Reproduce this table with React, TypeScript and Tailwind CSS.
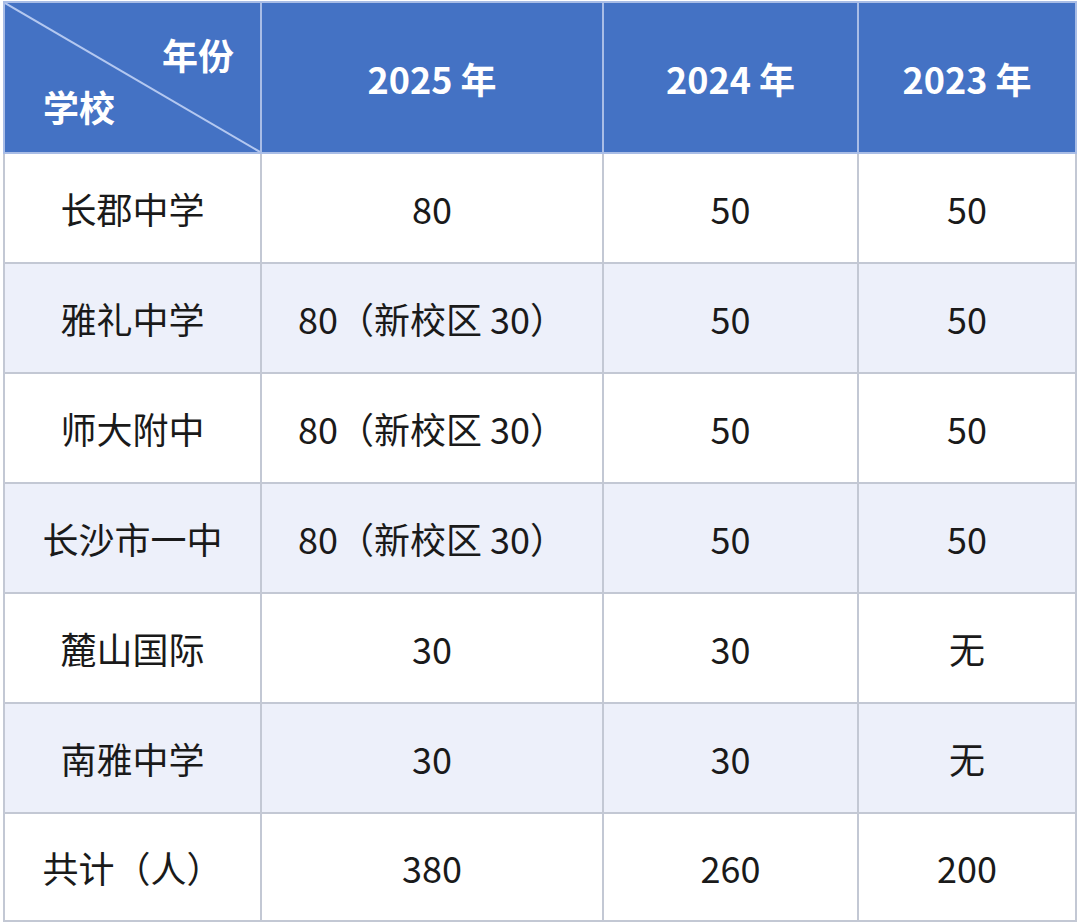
const rows = [
  {school: '长郡中学', y2025: '80', y2024: '50', y2023: '50'},
  {school: '雅礼中学', y2025: '80（新校区 30）', y2024: '50', y2023: '50'},
  {school: '师大附中', y2025: '80（新校区 30）', y2024: '50', y2023: '50'},
  {school: '长沙市一中', y2025: '80（新校区 30）', y2024: '50', y2023: '50'},
  {school: '麓山国际', y2025: '30', y2024: '30', y2023: '无'},
  {school: '南雅中学', y2025: '30', y2024: '30', y2023: '无'},
];

const font = {fontFamily: '"Noto Sans CJK SC", "Noto Sans", sans-serif'};

export default function App() {
  return (
    <div className="min-h-[923px] bg-white pl-[3px] pt-[1px]" style={font}>
      <table className="w-[1072px] table-fixed border-collapse text-[36px] text-[#1a1a1a]">
        <colgroup>
          <col className="w-[257px]" />
          <col className="w-[342px]" />
          <col className="w-[255px]" />
          <col className="w-[218px]" />
        </colgroup>
        <thead>
          <tr className="h-[151px] bg-[#4472c4] font-bold text-white">
            <th className="relative border-2 border-[#a9bde6] p-0">
              <svg className="absolute inset-0 h-full w-full" preserveAspectRatio="none" viewBox="0 0 100 100">
                <line x1="0" y1="0" x2="100" y2="100" stroke="#b4c8f0" strokeWidth="2" vectorEffect="non-scaling-stroke" />
              </svg>
              <div className="relative flex h-full flex-col pl-[38px] pr-[26px]">
                <span className="self-end pt-[5px] leading-none">年份</span>
                <span className="mt-[16px] self-start leading-none">学校</span>
              </div>
            </th>
            <th className="border-2 border-[#a9bde6]">2025 年</th>
            <th className="border-2 border-[#a9bde6]">2024 年</th>
            <th className="border-2 border-[#a9bde6]">2023 年</th>
          </tr>
        </thead>
        <tbody>
          {rows.map((row, i) => (
            <tr key={row.school} className={`h-[110px] ${i % 2 === 1 ? 'bg-[#edf0fa]' : 'bg-white'}`}>
              <td className="border-2 border-[#c3c8d4] text-center">{row.school}</td>
              <td className="border-2 border-[#c3c8d4] text-center">{row.y2025}</td>
              <td className="border-2 border-[#c3c8d4] text-center">{row.y2024}</td>
              <td className="border-2 border-[#c3c8d4] text-center">{row.y2023}</td>
            </tr>
          ))}
          <tr className="h-[108px] bg-white">
            <td className="border-2 border-[#c3c8d4] text-center">共计（人）</td>
            <td className="border-2 border-[#c3c8d4] text-center">380</td>
            <td className="border-2 border-[#c3c8d4] text-center">260</td>
            <td className="border-2 border-[#c3c8d4] text-center">200</td>
          </tr>
        </tbody>
      </table>
    </div>
  );
}
